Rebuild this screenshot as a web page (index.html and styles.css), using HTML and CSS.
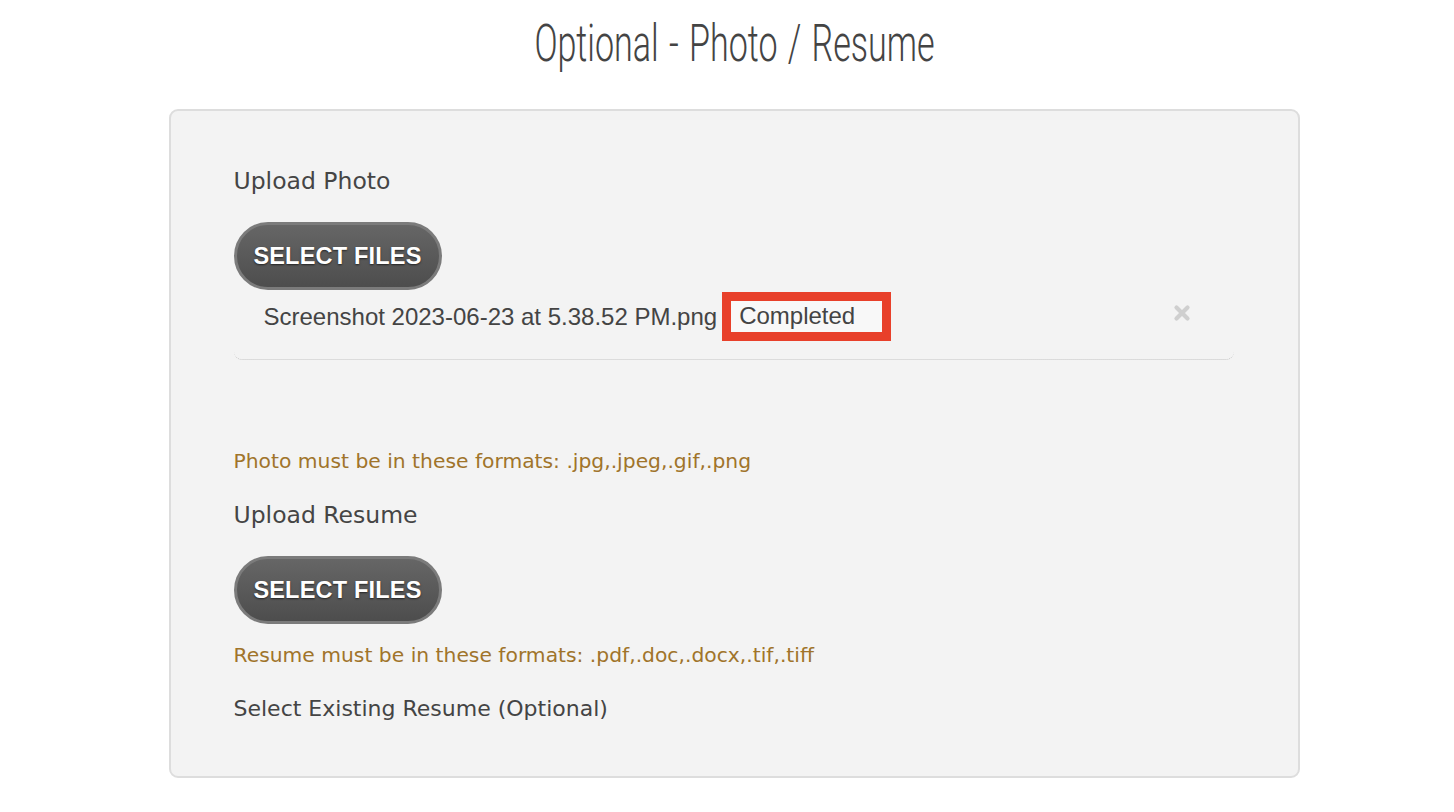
FILE: index.html
```html
<!DOCTYPE html>
<html lang="en">
<head>
<meta charset="utf-8">
<title>Optional - Photo / Resume</title>
<link rel="stylesheet" href="styles.css">
</head>
<body>
<div class="page">
  <h1 class="title"><span class="title-text">Optional - Photo / Resume</span></h1>
  <div class="card">
    <div class="label">Upload Photo</div>
    <button class="select-btn" type="button">SELECT FILES</button>
    <div class="upload-list">
      <div class="upload-row">
        <span class="file-name">Screenshot 2023-06-23 at 5.38.52 PM.png</span>
        <span class="status">Completed</span>
        <span class="remove" aria-label="Remove">
          <svg width="18" height="18" viewBox="0 0 18 18"><path d="M3.5 3.5 L14.5 14.5 M14.5 3.5 L3.5 14.5" stroke="#cfcfcf" stroke-width="4.2" stroke-linecap="round"/></svg>
        </span>
      </div>
    </div>
    <div class="hint hint-photo">Photo must be in these formats: .jpg,.jpeg,.gif,.png</div>
    <div class="label label-resume">Upload Resume</div>
    <button class="select-btn" type="button">SELECT FILES</button>
    <div class="hint hint-resume">Resume must be in these formats: .pdf,.doc,.docx,.tif,.tiff</div>
    <div class="existing">Select Existing Resume (Optional)</div>
  </div>
</div>
</body>
</html>
```

FILE: styles.css
```css
html, body {
  margin: 0;
  padding: 0;
  background: #ffffff;
}

.page {
  padding-left: 14px;
  box-sizing: border-box;
  width: 100%;
  display: flex;
  flex-direction: column;
  align-items: center;
}

.title {
  margin: 14px 0 0 0;
  height: 95px;
  font-family: Roboto, "DejaVu Sans", sans-serif;
  font-weight: 300;
  font-size: 52px;
  line-height: 60px;
  color: #444444;
  text-align: center;
}

.title-text {
  display: inline-block;
  transform: scaleX(0.655);
  transform-origin: center;
  word-spacing: 3px;
}

.card {
  width: 1131px;
  box-sizing: border-box;
  border: 2px solid #dddddd;
  border-radius: 9px;
  background: #f3f3f3;
  padding: 55px 63px 55px 63px;
  display: flex;
  flex-direction: column;
  align-items: flex-start;
  font-family: "DejaVu Sans", Verdana, sans-serif;
  color: #444444;
}

.label {
  font-size: 23.5px;
  line-height: 30px;
  color: #454545;
}

.select-btn {
  margin-top: 26px;
  height: 68px;
  width: 208px;
  box-sizing: border-box;
  border: 3px solid #7b7b7b;
  border-radius: 34px;
  background: linear-gradient(#666666, #4d4d4d);
  color: #ffffff;
  font-family: "Liberation Sans", Arial, sans-serif;
  font-weight: 700;
  font-size: 23.5px;
  letter-spacing: 0.2px;
  text-shadow: 0 1px 2px rgba(0, 0, 0, 0.6);
  padding: 0;
  cursor: pointer;
}

.upload-list {
  width: 1000px;
  height: 70px;
  box-sizing: border-box;
  border-bottom: 1px dotted #c4c4c4;
  border-bottom-right-radius: 8px;
  border-bottom-left-radius: 8px;
}

.upload-row {
  display: flex;
  align-items: center;
  padding: 2px 0 0 30px;
  height: 49px;
}

.file-name {
  font-family: "Liberation Sans", Arial, sans-serif;
  font-size: 24px;
  color: #444444;
}

.status {
  margin-left: 5px;
  width: 169px;
  height: 49px;
  box-sizing: border-box;
  border: 9px solid #e8402a;
  background: #f8f8f8;
  padding-left: 8px;
  font-family: "Liberation Sans", Arial, sans-serif;
  font-size: 24px;
  line-height: 30px;
  color: #444444;
}

.remove {
  margin-left: auto;
  margin-right: 43px;
  margin-top: -8px;
  width: 18px;
  height: 18px;
  display: flex;
}

.hint {
  font-size: 20.3px;
  line-height: 24px;
  color: #a0742a;
}

.hint-photo {
  margin-top: 89px;
}

.label-resume {
  margin-top: 27px;
}

.hint-resume {
  margin-top: 19px;
}

.existing {
  margin-top: 30px;
  font-size: 22px;
  line-height: 24px;
  color: #444444;
}
```
